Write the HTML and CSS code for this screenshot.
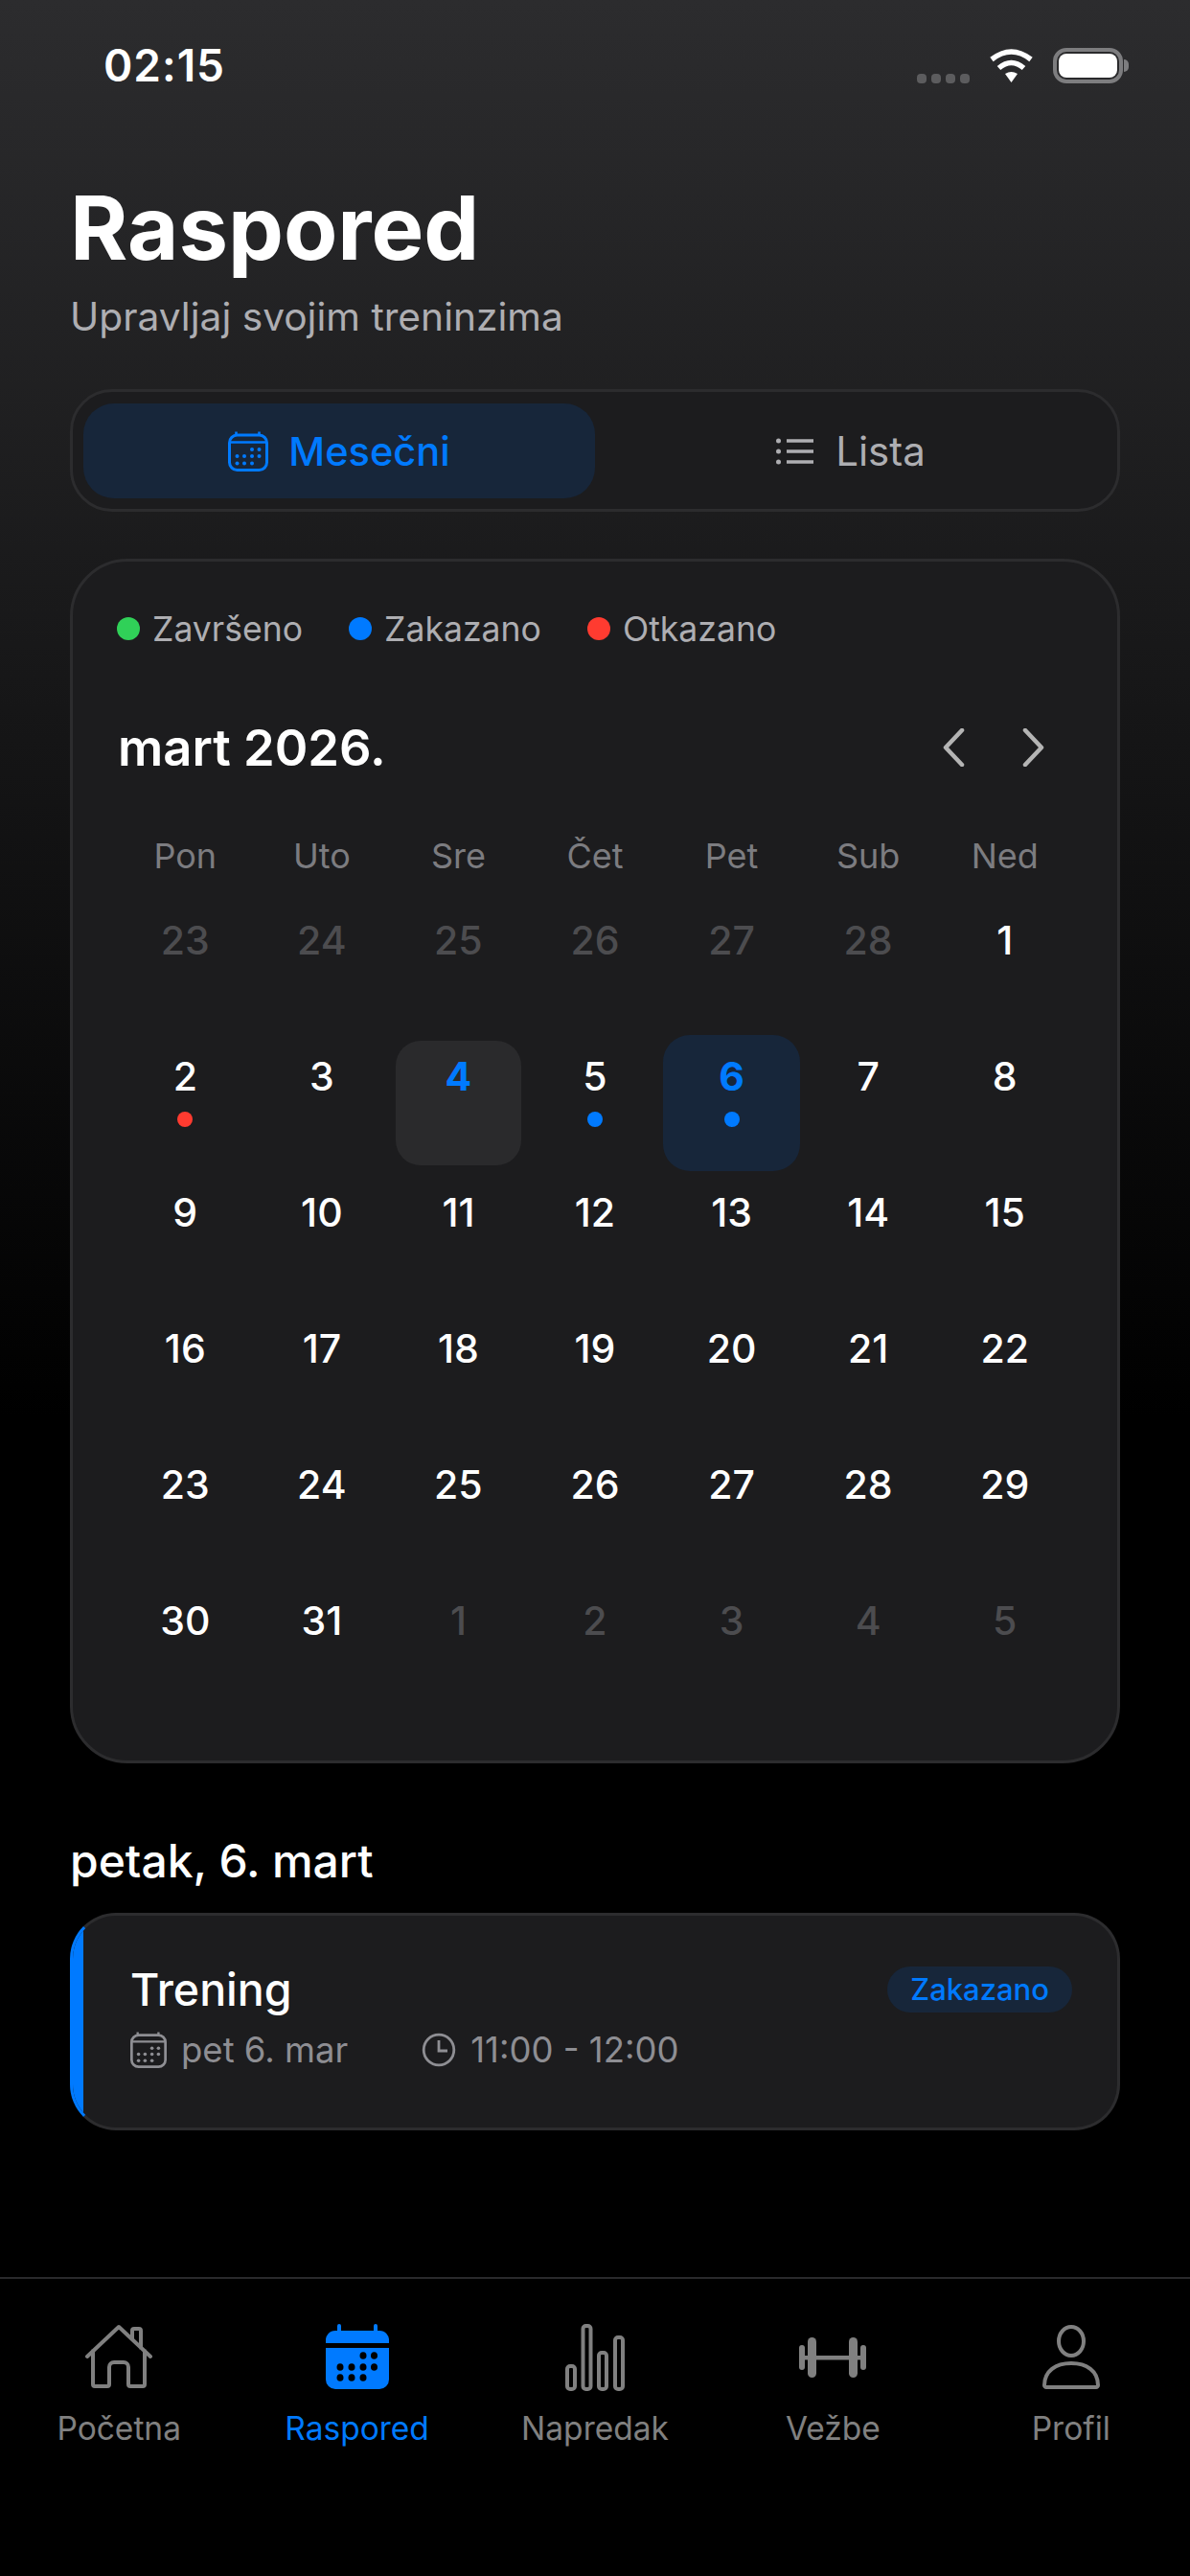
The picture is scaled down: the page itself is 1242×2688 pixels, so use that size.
FILE: index.html
```html
<!DOCTYPE html>
<html lang="sr">
<head>
  <meta charset="UTF-8">
  <meta name="viewport" content="width=device-width, initial-scale=1.0">
  <title>Raspored</title>
  <link rel="stylesheet" href="styles.css">
</head>
<body>
  <svg class="defs" width="0" height="0">
    <symbol id="cal" viewBox="0 0 42 42">
      <rect x="1.5" y="4" width="39" height="36.5" rx="8" fill="none" stroke="currentColor" stroke-width="3"/>
      <path d="M2 11.5h38M8.5 0.5v4M32.5 0.5v4" fill="none" stroke="currentColor" stroke-width="2.6"/>
      <g fill="currentColor">
        <circle cx="25" cy="19" r="2"/><circle cx="32.5" cy="19" r="2"/>
        <circle cx="9.5" cy="26" r="2"/><circle cx="17" cy="26" r="2"/><circle cx="25" cy="26" r="2"/><circle cx="32.5" cy="26" r="2"/>
        <circle cx="9.5" cy="33.5" r="2"/><circle cx="17" cy="33.5" r="2"/><circle cx="25" cy="33.5" r="2"/>
      </g>
    </symbol>
  </svg>

  <div class="status">
    <span class="time">02:15</span>
    <div class="status-right">
      <div class="signal"><i></i><i></i><i></i><i></i></div>
      <svg class="wifi" width="47" height="36" viewBox="0 0 47 36">
        <path d="M3 12Q23.500-4 44 12" fill="none" stroke="#fff" stroke-width="5.500"/>
        <path d="M10.500 21Q23.500 10 36.500 21" fill="none" stroke="#fff" stroke-width="5.500"/>
        <path d="M17 27Q23.500 23 30 27L23.500 36Z" fill="#fff"/>
      </svg>
      <div class="battery"><div class="battery-fill"></div></div>
      <div class="battery-tip"></div>
    </div>
  </div>

  <main class="content">
    <h1>Raspored</h1>
    <p class="subtitle">Upravljaj svojim treninzima</p>

    <div class="segment">
      <div class="seg-btn active">
        <svg class="seg-icon" width="42" height="42"><use href="#cal"/></svg>
        Mesečni
      </div>
      <div class="seg-btn">
        <svg class="seg-icon" width="40" height="30" viewBox="0 0 40 30">
          <path d="M11 4h28M11 15h28M11 26h28" stroke="currentColor" stroke-width="3.500" fill="none"/>
          <circle cx="2.500" cy="4" r="2.500" fill="currentColor"/><circle cx="2.500" cy="15" r="2.500" fill="currentColor"/><circle cx="2.500" cy="26" r="2.500" fill="currentColor"/>
        </svg>
        Lista
      </div>
    </div>

    <section class="card">
      <div class="legend">
        <span class="legend-item"><i class="dot green"></i>Završeno</span>
        <span class="legend-item"><i class="dot blue"></i>Zakazano</span>
        <span class="legend-item"><i class="dot red"></i>Otkazano</span>
      </div>

      <div class="month-row">
        <span class="month">mart 2026.</span>
        <div class="month-nav">
          <svg width="24" height="40" viewBox="0 0 24 40"><path d="M21 2L4 20l17 18" fill="none" stroke="#b4b4b4" stroke-width="4.500" stroke-linecap="round" stroke-linejoin="round"/></svg>
          <svg width="24" height="40" viewBox="0 0 24 40"><path d="M3 2l17 18L3 38" fill="none" stroke="#b4b4b4" stroke-width="4.500" stroke-linecap="round" stroke-linejoin="round"/></svg>
        </div>
      </div>

      <div class="weekdays">
        <span>Pon</span><span>Uto</span><span>Sre</span><span>Čet</span><span>Pet</span><span>Sub</span><span>Ned</span>
      </div>

      <div class="days">
        <div class="day out">23</div><div class="day out">24</div><div class="day out">25</div><div class="day out">26</div><div class="day out">27</div><div class="day out">28</div><div class="day">1</div>
        <div class="day">2<i class="mark red"></i></div><div class="day">3</div><div class="day today">4</div><div class="day">5<i class="mark blue"></i></div><div class="day selected">6<i class="mark blue"></i></div><div class="day">7</div><div class="day">8</div>
        <div class="day">9</div><div class="day">10</div><div class="day">11</div><div class="day">12</div><div class="day">13</div><div class="day">14</div><div class="day">15</div>
        <div class="day">16</div><div class="day">17</div><div class="day">18</div><div class="day">19</div><div class="day">20</div><div class="day">21</div><div class="day">22</div>
        <div class="day">23</div><div class="day">24</div><div class="day">25</div><div class="day">26</div><div class="day">27</div><div class="day">28</div><div class="day">29</div>
        <div class="day">30</div><div class="day">31</div><div class="day out">1</div><div class="day out">2</div><div class="day out">3</div><div class="day out">4</div><div class="day out">5</div>
      </div>
    </section>

    <h2>petak, 6. mart</h2>

    <div class="session">
      <div class="session-bar"></div>
      <div class="session-body">
        <div class="session-head">
          <span class="session-title">Trening</span>
          <span class="badge">Zakazano</span>
        </div>
        <div class="session-meta">
          <svg width="38" height="38"><use href="#cal"/></svg>
          <span class="meta-date">pet 6. mar</span>
          <svg width="36" height="36" viewBox="0 0 36 36"><circle cx="18" cy="18" r="15.800" fill="none" stroke="currentColor" stroke-width="2.800"/><path d="M18 8v11h9" fill="none" stroke="currentColor" stroke-width="2.800"/></svg>
          <span>11:00 - 12:00</span>
        </div>
      </div>
    </div>
  </main>

  <nav class="tabbar">
    <div class="tab">
      <svg width="70" height="70" viewBox="0 0 70 70">
        <path d="M2 34L35 3l33 31M8 28v35a2 2 0 0 0 2 2h13a2 2 0 0 0 2-2V45a5 5 0 0 1 5-5h10a5 5 0 0 1 5 5v18a2 2 0 0 0 2 2h13a2 2 0 0 0 2-2V28M49 16V7a2 2 0 0 1 2-2h5a2 2 0 0 1 2 2v18" fill="none" stroke="currentColor" stroke-width="4" stroke-linecap="round" stroke-linejoin="round"/>
      </svg>
      <span>Početna</span>
    </div>
    <div class="tab active">
      <svg width="66" height="70" viewBox="0 0 66 70">
        <path d="M14 2v5M52 2v5" stroke="currentColor" stroke-width="4" stroke-linecap="round"/>
        <path d="M0 18a10 10 0 0 1 10-11h46a10 10 0 0 1 10 11v2H0zM0 25h66v33a10 10 0 0 1-10 10H10A10 10 0 0 1 0 58z" fill="currentColor"/>
        <g fill="#000">
          <ellipse cx="39" cy="33" rx="3.500" ry="3.800"/><ellipse cx="50.500" cy="33" rx="3.500" ry="3.800"/>
          <ellipse cx="15" cy="45" rx="3.500" ry="3.800"/><ellipse cx="27" cy="45" rx="3.500" ry="3.800"/><ellipse cx="39" cy="45" rx="3.500" ry="3.800"/><ellipse cx="50.500" cy="45" rx="3.500" ry="3.800"/>
          <ellipse cx="15" cy="56" rx="3.500" ry="3.800"/><ellipse cx="27" cy="56" rx="3.500" ry="3.800"/><ellipse cx="39" cy="56" rx="3.500" ry="3.800"/>
        </g>
      </svg>
      <span>Raspored</span>
    </div>
    <div class="tab">
      <svg width="62" height="70" viewBox="0 0 62 70" fill="none" stroke="currentColor" stroke-width="4">
        <rect x="2" y="44" width="8" height="24" rx="3"/>
        <rect x="18.500" y="2" width="8" height="66" rx="3"/>
        <rect x="35" y="30" width="8" height="38" rx="3"/>
        <rect x="52" y="14" width="8" height="54" rx="3"/>
      </svg>
      <span>Napredak</span>
    </div>
    <div class="tab">
      <svg width="70" height="70" viewBox="0 0 70 70" fill="currentColor">
        <rect x="0" y="22" width="6" height="26" rx="3"/>
        <rect x="9" y="14" width="9" height="42" rx="4.500"/>
        <rect x="6" y="33" width="58" height="4.500"/>
        <rect x="52" y="14" width="9" height="42" rx="4.500"/>
        <rect x="64" y="22" width="6" height="26" rx="3"/>
      </svg>
      <span>Vežbe</span>
    </div>
    <div class="tab">
      <svg width="62" height="70" viewBox="0 0 62 70" fill="none" stroke="currentColor" stroke-width="4">
        <ellipse cx="31" cy="18" rx="13" ry="15"/>
        <path d="M3 64c0-15 12-23 28-23s28 8 28 23c0 1-1 2-2 2H5c-1 0-2-1-2-2z" stroke-linejoin="round"/>
      </svg>
      <span>Profil</span>
    </div>
  </nav>
</body>
</html>
```

FILE: styles.css
```css
* {
  box-sizing: border-box;
}
body {
  margin: 0;
  width: 1242px;
  height: 2688px;
  display: flex;
  flex-direction: column;
  font-family: Inter, "Noto Sans", sans-serif;
  color: #fff;
  background: linear-gradient(180deg, #2c2c2e 0, #000 55%);
  overflow: hidden;
}
i {
  display: block;
}
.defs {
  display: none;
}

/* status bar */
.status {
  height: 136px;
  display: flex;
  align-items: center;
  justify-content: space-between;
  padding: 0 64px 0 108px;
}
.time {
  font-size: 46px;
  font-weight: 600;
  letter-spacing: 1px;
}
.status-right {
  display: flex;
  align-items: center;
}
.signal {
  display: flex;
  gap: 5px;
  align-self: flex-end;
  margin-right: 20px;
}
.signal i {
  width: 10px;
  height: 10px;
  border-radius: 4px;
  background: #5c5c5e;
}
.wifi {
  margin-right: 20px;
}
.battery {
  width: 73px;
  height: 37px;
  padding: 2px;
  border: 4px solid #7d7d7f;
  border-radius: 14px;
}
.battery-fill {
  height: 100%;
  border-radius: 8px;
  background: #fff;
}
.battery-tip {
  width: 5px;
  height: 13px;
  margin-left: 1px;
  border-radius: 0 6px 6px 0;
  background: #7d7d7f;
}

/* content */
.content {
  flex: 1;
  padding: 0 73px;
}
h1 {
  margin: 52px 0 0;
  font-size: 92px;
  line-height: 100px;
  font-weight: 700;
}
.subtitle {
  margin: 18px 0 50px;
  font-size: 40.7px;
  line-height: 50px;
  color: #aeaeb2;
}

.segment {
  height: 128px;
  display: grid;
  grid-template-columns: 1fr 1fr;
  padding: 12px 11px 11px;
  border: 3px solid #2c2c2e;
  border-radius: 44px;
  background: #1c1c1e;
}
.seg-btn {
  display: flex;
  align-items: center;
  justify-content: center;
  gap: 22px;
  font-size: 42px;
  font-weight: 400;
  color: #aeaeb2;
  border-radius: 32px;
}
.seg-btn.active {
  gap: 21px;
  font-size: 41.5px;
  background: #17263a;
  color: #007aff;
  font-weight: 500;
}

.card {
  height: 1257px;
  margin-top: 49px;
  padding: 47px 46px;
  border: 3px solid #2c2c2e;
  border-radius: 60px;
  background: #1c1c1e;
}
.legend {
  display: flex;
  gap: 48px;
  height: 46px;
  align-items: center;
}
.legend-item {
  display: flex;
  align-items: center;
  gap: 13px;
  font-size: 35.6px;
  color: #aeaeb2;
}
.dot {
  width: 24px;
  height: 24px;
  border-radius: 50%;
}
.green { background: #30d158; }
.blue { background: #007aff; }
.red { background: #ff3b30; }

.month-row {
  height: 70px;
  margin-top: 66px;
  display: flex;
  align-items: center;
  justify-content: space-between;
}
.month {
  font-size: 52.5px;
  font-weight: 600;
  margin-left: 1px;
}
.month-nav {
  display: flex;
  gap: 60px;
  margin-right: 29px;
}

.weekdays,
.days {
  display: grid;
  grid-template-columns: repeat(7, 1fr);
  text-align: center;
}
.weekdays {
  height: 32px;
  margin-top: 62px;
  font-size: 36px;
  line-height: 32px;
  color: #7c7c80;
}
.days {
  margin-top: 29px;
  grid-auto-rows: 142px;
}
.day {
  display: flex;
  flex-direction: column;
  align-items: center;
  padding-top: 21px;
  font-size: 41px;
  line-height: 44px;
  font-weight: 450;
}
.day.out {
  color: #4c4c4f;
}
.mark {
  width: 16px;
  height: 16px;
  margin-top: 15px;
  border-radius: 50%;
}
.day.today {
  margin: 6px;
  padding-top: 15px;
  border-radius: 26px;
  background: #2a2a2c;
  color: #007aff;
  font-weight: 700;
}
.day.selected {
  border-radius: 28px;
  background: #17263a;
  color: #007aff;
  font-weight: 700;
}

h2 {
  margin: 72px 0 24px;
  font-size: 48px;
  line-height: 60px;
  font-weight: 500;
}

.session {
  height: 227px;
  display: flex;
  overflow: hidden;
  border: 3px solid #2c2c2e;
  border-left-color: #007aff;
  border-radius: 48px;
  background: #1c1c1e;
}
.session-bar {
  width: 11px;
  background: #007aff;
}
.session-body {
  flex: 1;
  padding: 47px 47px 0 49px;
}
.session-head {
  display: flex;
  justify-content: space-between;
  align-items: flex-start;
}
.session-title {
  font-size: 46.5px;
  line-height: 60px;
  font-weight: 550;
}
.badge {
  height: 48px;
  margin-top: 6px;
  padding: 0 24px;
  border-radius: 24px;
  background: #17263a;
  color: #007aff;
  font-size: 31px;
  line-height: 48px;
  font-weight: 500;
}
.session-meta {
  margin-top: 11px;
  display: flex;
  align-items: center;
  gap: 15px;
  font-size: 36.5px;
  line-height: 44px;
  color: #8e8e93;
}
.meta-date {
  margin-right: 62px;
}

/* bottom tabs */
.tabbar {
  height: 312px;
  display: grid;
  grid-template-columns: repeat(5, 1fr);
  padding-top: 47px;
  border-top: 2px solid #2a2a2c;
  background: #000;
}
.tab {
  display: flex;
  flex-direction: column;
  align-items: center;
  gap: 19px;
  font-size: 33.5px;
  line-height: 40px;
  color: #808080;
}
.tab.active {
  color: #007aff;
}
```
